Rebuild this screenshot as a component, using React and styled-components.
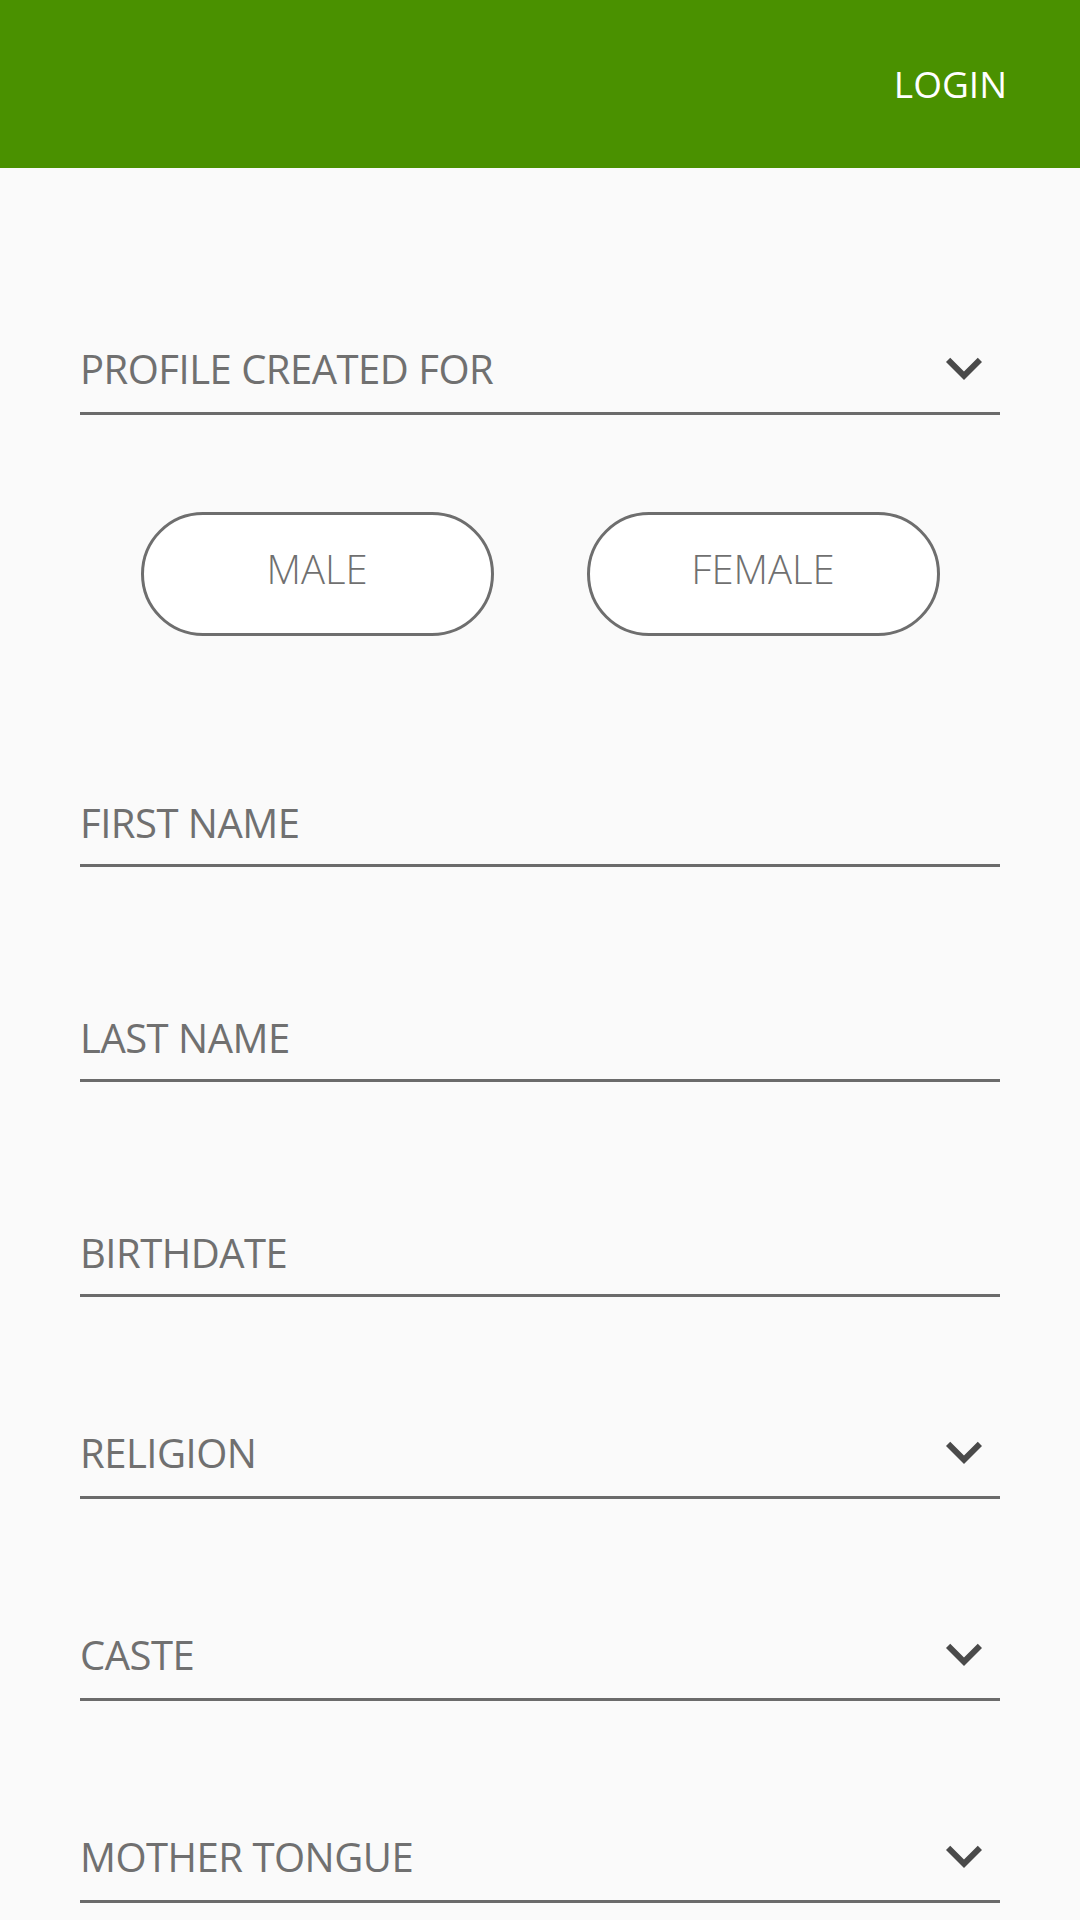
import React from "react";
import styled, { createGlobalStyle } from "styled-components";

const GlobalStyle = createGlobalStyle`
  html, body {
    margin: 0;
    padding: 0;
    background: #fafafa;
  }
  body {
    font-family: "Open Sans", "Noto Sans", sans-serif;
  }
  * { box-sizing: border-box; }
`;

const Page = styled.div`
  width: 1080px;
  min-height: 1920px;
  background: #fafafa;
`;

const Header = styled.header`
  height: 168px;
  background: #4a9100;
  display: flex;
  align-items: center;
  justify-content: flex-end;
  padding-right: 73px;
`;

const LoginButton = styled.button`
  border: none;
  background: transparent;
  color: #ffffff;
  font-family: "Open Sans", sans-serif;
  font-size: 37px;
  line-height: 1;
  padding: 0;
  margin-top: -2px;
  cursor: pointer;
`;

const Form = styled.form`
  display: flex;
  flex-direction: column;
  padding: 0 80px;
`;

const Field = styled.div`
  display: flex;
  align-items: flex-end;
  justify-content: space-between;
  height: 83px;
  margin-top: ${(p) => p.$top}px;
  border-bottom: 3px solid #6b6b6b;
`;

const Label = styled.span`
  font-family: "Open Sans", sans-serif;
  font-size: 40px;
  line-height: 1;
  color: #707070;
  padding-bottom: ${(p) => p.$pb}px;
  letter-spacing: -0.5px;
`;

const Chevron = styled.svg`
  width: 72px;
  height: 72px;
  margin-bottom: 8px;
  flex-shrink: 0;
`;

const GenderRow = styled.div`
  display: flex;
  justify-content: center;
  gap: 93px;
  margin-top: 97px;
`;

const GenderButton = styled.button`
  width: 353px;
  height: 124px;
  border: 3px solid #6e6e6e;
  border-radius: 62px;
  background: #ffffff;
  color: #707070;
  font-family: "Open Sans", sans-serif;
  font-weight: 300;
  font-size: 40px;
  line-height: 1;
  padding: 0 0 10px;
  cursor: pointer;
`;

function ExpandIcon() {
  return (
    <Chevron viewBox="0 0 24 24" aria-hidden="true">
      <path d="M16.59 8.59L12 13.17 7.41 8.59 6 10l6 6 6-6z" fill="#4a4a4a" />
    </Chevron>
  );
}

function TextField({ label, top }) {
  return (
    <Field $top={top}>
      <Label $pb={21}>{label}</Label>
    </Field>
  );
}

function SelectField({ label, top }) {
  return (
    <Field $top={top}>
      <Label $pb={23}>{label}</Label>
      <ExpandIcon />
    </Field>
  );
}

export default function App() {
  return (
    <Page>
      <GlobalStyle />
      <Header>
        <LoginButton type="button">LOGIN</LoginButton>
      </Header>
      <Form>
        <SelectField label="PROFILE CREATED FOR" top={164} />
        <GenderRow>
          <GenderButton type="button">MALE</GenderButton>
          <GenderButton type="button">FEMALE</GenderButton>
        </GenderRow>
        <TextField label="FIRST NAME" top={148} />
        <TextField label="LAST NAME" top={132} />
        <TextField label="BIRTHDATE" top={132} />
        <SelectField label="RELIGION" top={119} />
        <SelectField label="CASTE" top={119} />
        <SelectField label="MOTHER TONGUE" top={119} />
      </Form>
    </Page>
  );
}
